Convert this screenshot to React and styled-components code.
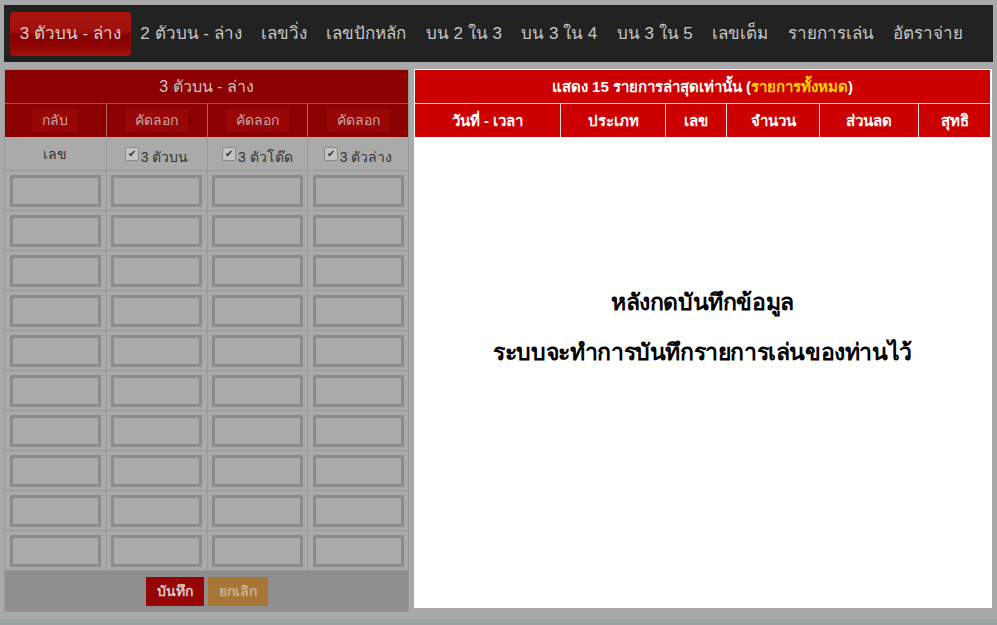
import styled, { createGlobalStyle } from 'styled-components';

const GlobalStyle = createGlobalStyle`
  html, body {
    margin: 0;
    padding: 0;
    background: #a9a9a9;
    font-family: Tahoma, "Liberation Sans", "Noto Sans", sans-serif;
  }
`;

const Page = styled.div`
  width: 997px;
  height: 625px;
  overflow: hidden;
  padding: 5px 4px 0;
  box-sizing: border-box;
  display: flex;
  flex-direction: column;
  & > * {
    flex-shrink: 0;
  }
`;

const Nav = styled.nav`
  display: flex;
  align-items: center;
  height: 57px;
  width: 989px;
  background: #222222;
  padding: 0 6px;
  box-sizing: border-box;
`;

const NavItem = styled.div`
  height: 44px;
  line-height: 44px;
  padding: 0 9.7px;
  font-size: 17px;
  color: ${(p) => (p.$active ? '#d9d0d0' : '#c6c6c6')};
  border-radius: 4px;
  white-space: nowrap;
  background: ${(p) =>
    p.$active
      ? 'linear-gradient(#a8150f 0%, #a0100b 45%, #860000 52%, #8e0402 80%, #a8130e 100%)'
      : 'transparent'};
`;

const Content = styled.div`
  display: flex;
  gap: 5px;
  margin-top: 7px;
  align-items: flex-start;
`;

const LeftPanel = styled.div`
  width: 405px;
  background: #aaaaaa;
  border: 1px solid #999999;
  box-sizing: border-box;
  display: flex;
  flex-direction: column;
`;

const PanelTitle = styled.div`
  height: 33px;
  line-height: 33px;
  text-align: center;
  background: #8b0000;
  color: #c9c4c4;
  font-size: 16px;
  border-bottom: 1px solid #a35050;
`;

const Row = styled.div`
  display: grid;
  grid-template-columns: repeat(4, 1fr);
  height: ${(p) => p.$h}px;
  background: ${(p) => p.$bg || 'transparent'};
  border-bottom: 1px solid ${(p) => p.$line || '#999999'};
`;

const Cell = styled.div`
  display: flex;
  align-items: center;
  justify-content: center;
  border-left: 1px solid ${(p) => p.$line || '#999999'};
  font-size: 14px;
  color: #333333;
  padding-top: ${(p) => p.$shift || 0}px;
  &:first-child {
    border-left: none;
  }
`;

const SmallButton = styled.div`
  background: #990606;
  color: #c9a8a8;
  font-size: 14px;
  padding: 3px 10px 4px;
  line-height: 16px;
`;

const Check = styled.span`
  display: inline-flex;
  align-items: center;
  justify-content: center;
  width: 12px;
  height: 12px;
  margin-right: 2px;
  margin-top: -6px;
  background: #c4c4c4;
  border: 1px solid #8a8a8a;
  border-radius: 2px;
  font-size: 10px;
  line-height: 1;
  color: #333;
`;

const NumberBox = styled.div`
  width: 91px;
  height: 32px;
  box-sizing: border-box;
  border: 3px solid #8c8c8c;
  background: #aaaaaa;
`;

const PanelFooter = styled.div`
  height: 40px;
  background: #8e8e8e;
  display: flex;
  align-items: center;
  justify-content: center;
  gap: 4px;
`;

const ActionButton = styled.div`
  height: 29px;
  line-height: 29px;
  padding: 0 11px;
  font-size: 14px;
  font-weight: bold;
  color: ${(p) => (p.$tone === 'save' ? '#d8c8c8' : '#c3b08e')};
  background: ${(p) => (p.$tone === 'save' ? '#960404' : '#a87634')};
`;

const RightPanel = styled.div`
  width: 578px;
  height: 539px;
  background: #ffffff;
  padding: 1px 2px 0 1px;
  box-sizing: border-box;
  display: flex;
  flex-direction: column;
`;

const RightTitle = styled.div`
  height: 33px;
  line-height: 33px;
  text-align: center;
  background: #cc0000;
  color: #ffffff;
  font-weight: bold;
  font-size: 15px;
  border-bottom: 1px solid #dddddd;
`;

const AllLink = styled.span`
  color: #ffd400;
`;

const ColumnHeads = styled.div`
  display: grid;
  grid-template-columns: 145px 105px 61px 93px 99px 1fr;
  height: 33px;
  background: #cc0000;
`;

const ColumnHead = styled.div`
  display: flex;
  align-items: center;
  justify-content: center;
  color: #ffffff;
  font-weight: bold;
  font-size: 15px;
  border-left: 1px solid #dddddd;
  &:first-child {
    border-left: none;
  }
`;

const EmptyNote = styled.div`
  flex: 1;
  padding-top: 140px;
  text-align: center;
  font-size: 23px;
  font-weight: bold;
  line-height: 50px;
  color: #000000;
  letter-spacing: -0.4px;
`;

const BottomStrip = styled.div`
  margin: 7px -4px 0;
  height: 10px;
  background: #9ca1a4;
`;

const tabs = [
  '3 ตัวบน - ล่าง',
  '2 ตัวบน - ล่าง',
  'เลขวิ่ง',
  'เลขปักหลัก',
  'บน 2 ใน 3',
  'บน 3 ใน 4',
  'บน 3 ใน 5',
  'เลขเต็ม',
  'รายการเล่น',
  'อัตราจ่าย',
];

const heads = ['วันที่ - เวลา', 'ประเภท', 'เลข', 'จำนวน', 'ส่วนลด', 'สุทธิ'];
const picks = ['3 ตัวบน', '3 ตัวโต๊ด', '3 ตัวล่าง'];

export default function App() {
  const rows = Array.from({ length: 10 }, (_, i) => i);
  return (
    <>
      <GlobalStyle />
      <Page>
        <Nav>
          {tabs.map((t, i) => (
            <NavItem key={t} $active={i === 0}>{t}</NavItem>
          ))}
        </Nav>
        <Content>
          <LeftPanel>
            <PanelTitle>3 ตัวบน - ล่าง</PanelTitle>
            <Row $h={33} $bg="#8b0000" $line="#aaaaaa">
              <Cell $line="#b06060"><SmallButton>กลับ</SmallButton></Cell>
              <Cell $line="#b06060"><SmallButton>คัดลอก</SmallButton></Cell>
              <Cell $line="#b06060"><SmallButton>คัดลอก</SmallButton></Cell>
              <Cell $line="#b06060"><SmallButton>คัดลอก</SmallButton></Cell>
            </Row>
            <Row $h={32}>
              <Cell>เลข</Cell>
              {picks.map((p) => (
                <Cell key={p} $shift={6}>
                  <Check>✔</Check>{p}
                </Cell>
              ))}
            </Row>
            {rows.map((r) => (
              <Row key={r} $h={39}>
                <Cell><NumberBox /></Cell>
                <Cell><NumberBox /></Cell>
                <Cell><NumberBox /></Cell>
                <Cell><NumberBox /></Cell>
              </Row>
            ))}
            <PanelFooter>
              <ActionButton $tone="save">บันทึก</ActionButton>
              <ActionButton $tone="cancel">ยกเลิก</ActionButton>
            </PanelFooter>
          </LeftPanel>
          <RightPanel>
            <RightTitle>
              แสดง 15 รายการล่าสุดเท่านั้น (<AllLink>รายการทั้งหมด</AllLink>)
            </RightTitle>
            <ColumnHeads>
              {heads.map((h) => (
                <ColumnHead key={h}>{h}</ColumnHead>
              ))}
            </ColumnHeads>
            <EmptyNote>
              หลังกดบันทึกข้อมูล
              <br />
              ระบบจะทำการบันทึกรายการเล่นของท่านไว้
            </EmptyNote>
          </RightPanel>
        </Content>
        <BottomStrip />
      </Page>
    </>
  );
}
